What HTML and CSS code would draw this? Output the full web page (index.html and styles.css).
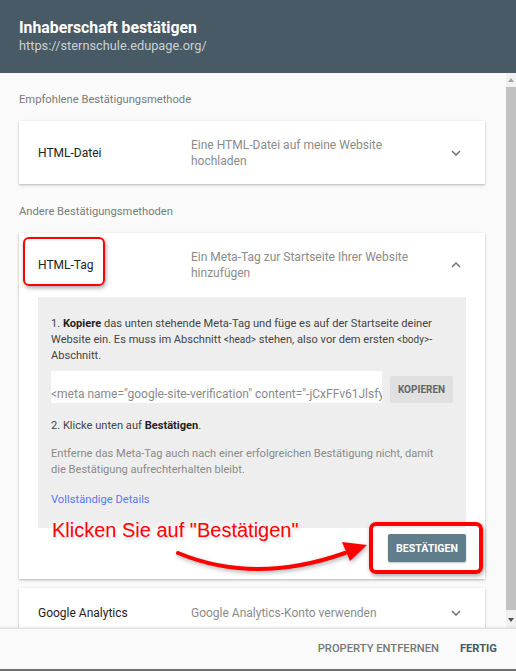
FILE: index.html
```html
<!DOCTYPE html>
<html lang="de">
<head>
<meta charset="utf-8">
<title>Inhaberschaft bestätigen</title>
<link rel="stylesheet" href="styles.css">
</head>
<body>
<div class="dialog">
  <header class="head">
    <div class="head-title">Inhaberschaft bestätigen</div>
    <div class="head-url">https://sternschule.edupage.org/</div>
  </header>

  <div class="scroll">
    <div class="content">
      <div class="section-label first">Empfohlene Bestätigungsmethode</div>
      <div class="card">
        <div class="row">
          <div class="row-title">HTML-Datei</div>
          <div class="row-desc">Eine HTML-Datei auf meine Website hochladen</div>
          <svg class="chev" viewBox="0 0 24 24"><path d="M16.59 8.59L12 13.17 7.41 8.59 6 10l6 6 6-6z"/></svg>
        </div>
      </div>

      <div class="section-label">Andere Bestätigungsmethoden</div>
      <div class="card card-open">
        <div class="row">
          <div class="row-title">HTML-Tag</div>
          <div class="row-desc">Ein Meta-Tag zur Startseite Ihrer Website hinzufügen</div>
          <svg class="chev" viewBox="0 0 24 24"><path d="M7.41 15.41L12 10.83l4.59 4.58L18 14l-6-6-6 6z"/></svg>
        </div>
        <div class="panel">
          <p class="step">1. <b>Kopiere</b> das unten stehende Meta-Tag und füge es auf der Startseite deiner Website ein. Es muss im Abschnitt <code>&lt;head&gt;</code> stehen, also vor dem ersten <code>&lt;body&gt;</code>-Abschnitt.</p>
          <div class="copy-row">
            <div class="meta-input">&lt;meta name="google-site-verification" content="-jCxFFv61JlsfyQ2pW8kTzR4nVbX0aLmE7uHcYd" /&gt;</div>
            <button class="btn-copy">KOPIEREN</button>
          </div>
          <p class="step step2">2. Klicke unten auf <b>Bestätigen</b>.</p>
          <p class="note">Entferne das Meta-Tag auch nach einer erfolgreichen Bestätigung nicht, damit die Bestätigung aufrechterhalten bleibt.</p>
          <a class="details">Vollständige Details</a>
        </div>
        <div class="actions">
          <button class="btn-verify">BESTÄTIGEN</button>
        </div>

        <div class="mark mark-tag"></div>
        <div class="mark mark-btn"></div>
        <div class="hint">Klicken Sie auf "Bestätigen"</div>
        <svg class="arrow" viewBox="0 0 466 346" width="466" height="346">
          <path d="M159 320 Q236 352 326 320" fill="none" stroke="#f00" stroke-width="4" stroke-linecap="round"/>
          <polygon points="348,312 331,328 323,309" fill="#f00"/>
        </svg>
      </div>

      <div class="card">
        <div class="row">
          <div class="row-title">Google Analytics</div>
          <div class="row-desc">Google Analytics-Konto verwenden</div>
          <svg class="chev" viewBox="0 0 24 24"><path d="M16.59 8.59L12 13.17 7.41 8.59 6 10l6 6 6-6z"/></svg>
        </div>
      </div>
    </div>

    <div class="scrollbar">
      <div class="sb-arrow up"></div>
      <div class="sb-thumb"></div>
      <div class="sb-arrow down"></div>
    </div>
  </div>

  <footer class="foot">
    <button class="foot-btn">PROPERTY ENTFERNEN</button>
    <button class="foot-btn done">FERTIG</button>
  </footer>
</div>
</body>
</html>
```

FILE: styles.css
```css
* { box-sizing: border-box; }
html, body { margin: 0; padding: 0; }
body {
  width: 516px;
  height: 671px;
  overflow: hidden;
  font-family: Roboto, "Noto Sans", Arial, sans-serif;
  background: #fafafa;
}
.dialog {
  width: 516px;
  height: 671px;
  display: flex;
  flex-direction: column;
  border-bottom: 2px solid #707070;
}
.head {
  height: 73px;
  flex: none;
  background: #475a65;
  padding: 18px 19px 0;
}
.head-title {
  color: #fff;
  font-size: 15.8px;
  font-weight: 700;
  line-height: 20px;
}
.head-url {
  color: #c9d1d6;
  font-size: 12.8px;
  line-height: 16px;
}
.scroll {
  flex: 1;
  display: flex;
  overflow: hidden;
  background: #fafafa;
  min-height: 0;
}
.content {
  flex: 1;
  padding: 0 21px 0 19px;
  overflow: hidden;
}
.section-label {
  font-size: 11.2px;
  line-height: 16px;
  color: #7a7a7a;
  margin: 20px 0 13px;
}
.section-label.first { margin-top: 19px; }
.card {
  background: #fff;
  box-shadow: 0 1px 2px rgba(0,0,0,0.22), 0 1px 4px rgba(0,0,0,0.08);
  margin-bottom: 9px;
  position: relative;
}
.row {
  display: flex;
  align-items: center;
  padding: 16px 20px 15px 19px;
}
.card-open .row { padding-bottom: 16px; }
.row-title {
  width: 153px;
  flex: none;
  font-size: 12px;
  line-height: 16px;
  color: #222;
}
.row-desc {
  flex: 1;
  font-size: 12px;
  line-height: 16px;
  color: #8b8b8b;
}
.chev {
  width: 18px;
  height: 18px;
  flex: none;
  margin-left: 17px;
  fill: #6f6f6f;
}
.panel {
  margin: 0 19px;
  background: #eeeeee;
  padding: 19px 18px 20px 13px;
}
.step {
  margin: 0;
  font-size: 11.1px;
  line-height: 16px;
  color: #444;
}
.step b { color: #1f1f1f; font-weight: 700; }
.step code {
  font-family: Roboto, sans-serif;
  font-size: 10px;
  color: #444;
}
.copy-row {
  display: flex;
  align-items: flex-end;
  margin-top: 7px;
}
.meta-input {
  width: 331px;
  height: 32px;
  flex: none;
  background: #fff;
  font-size: 12px;
  line-height: 16px;
  padding-top: 15px;
  color: #8a8a8a;
  white-space: nowrap;
  overflow: hidden;
}
.btn-copy {
  width: 63px;
  height: 27px;
  flex: none;
  margin-left: 8px;
  border: none;
  border-radius: 2px;
  background: #e0e0e0;
  color: #666;
  font-family: Roboto, sans-serif;
  font-size: 10px;
  font-weight: 700;
  padding: 0;
}
.step2 { margin-top: 15px; }
.note {
  margin: 12px 0 0;
  font-size: 11.1px;
  line-height: 16px;
  color: #8a8a8a;
}
.details {
  display: block;
  margin-top: 14px;
  font-size: 11.2px;
  line-height: 16px;
  color: #5a78f0;
}
.actions {
  display: flex;
  justify-content: flex-end;
  padding: 6px 19px 17px;
}
.btn-verify {
  width: 78px;
  height: 28px;
  border: none;
  border-radius: 2px;
  background: #607d8b;
  color: #fff;
  font-family: Roboto, sans-serif;
  font-size: 10.6px;
  font-weight: 700;
  padding: 0;
  box-shadow: 0 1px 2px rgba(0,0,0,0.25);
}

/* annotations */
.mark {
  position: absolute;
  border: 2px solid #f00;
  border-radius: 6px;
  box-shadow: 1px 2px 4px rgba(0,0,0,0.35);
}
.mark-tag { left: 4px; top: 4px; width: 82px; height: 49px; }
.mark-btn {
  left: 350px; top: 289px; width: 114px; height: 52px;
  border-width: 4px; border-radius: 7px;
}
.hint {
  position: absolute;
  left: 33px;
  top: 285px;
  font-family: "Liberation Sans", Arial, sans-serif;
  font-size: 20px;
  line-height: 24px;
  color: #f00;
  white-space: nowrap;
  text-shadow: 0 0 6px #fff, 0 0 10px #fff, 0 0 14px #fff, 1px 2px 3px rgba(0,0,0,0.25);
}
.arrow {
  position: absolute;
  left: 0;
  top: 0;
  filter: drop-shadow(1px 2px 2px rgba(0,0,0,0.3));
  pointer-events: none;
}

/* scrollbar */
.scrollbar {
  width: 10px;
  flex: none;
  background: #f1f1f1;
  display: flex;
  flex-direction: column;
  align-items: center;
}
.sb-arrow {
  width: 0; height: 0;
  border-left: 3.5px solid transparent;
  border-right: 3.5px solid transparent;
  flex: none;
}
.sb-arrow.up { border-bottom: 4px solid #a3a3a3; margin-top: 5px; }
.sb-arrow.down { border-top: 4px solid #505050; margin-bottom: 6px; }
.sb-thumb {
  width: 10px;
  flex: 1;
  background: #c1c1c1;
  margin: 5px 0 8px;
}

/* footer */
.foot {
  height: 41px;
  flex: none;
  background: #fafafa;
  border-top: 1px solid #e0e0e0;
  box-shadow: 0 -1px 2px rgba(0,0,0,0.08);
  display: flex;
  align-items: center;
  justify-content: flex-end;
  padding: 0 19px 2px 0;
  gap: 21px;
  position: relative;
  z-index: 1;
}
.foot-btn {
  border: none;
  background: none;
  padding: 0;
  font-family: Roboto, sans-serif;
  font-size: 11.2px;
  font-weight: 500;
  color: #777;
}
.foot-btn.done { color: #455a64; font-weight: 700; }
```
